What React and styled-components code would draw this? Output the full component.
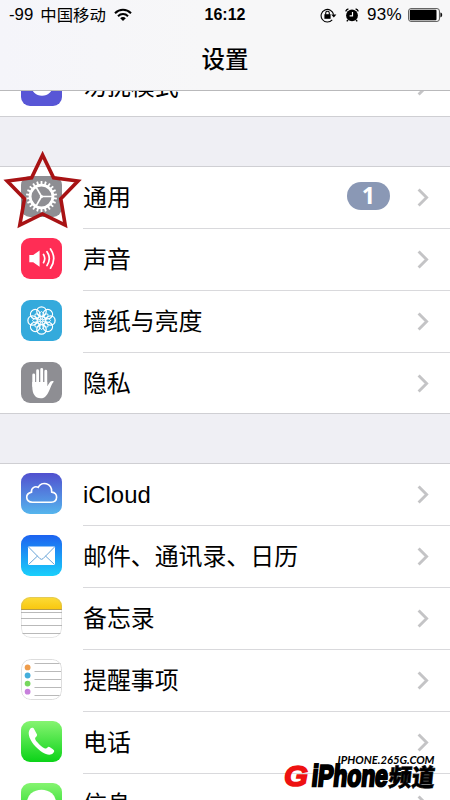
import React from 'react'
import styled, { createGlobalStyle } from 'styled-components'

const GlobalStyle = createGlobalStyle`
  * {
    box-sizing: border-box;
  }
  body {
    margin: 0;
    background: #efeff4;
    color: #000;
    font-family: 'Liberation Sans', 'Noto Sans CJK SC', sans-serif;
  }
`

const WifiIcon = () => (
  <svg width="18" height="14" viewBox="0 0 18 14" fill="none" stroke="#000" strokeWidth="2">
    <path d="M1 5.2C5.6 .6 12.4 .6 17 5.2" />
    <path d="M4 8.2C6.8 5.4 11.2 5.4 14 8.2" />
    <path d="M9 13L6.2 10.2C7.8 8.7 10.2 8.7 11.8 10.2Z" fill="#000" stroke="none" />
  </svg>
)

const LockIcon = () => (
  <svg width="17" height="15" viewBox="0 0 17 15" fill="none" stroke="#000">
    <path d="M12.2 11.8A6.3 6.3 0 1 1 13.6 6.6" strokeWidth="1.1" />
    <path d="M11.2 6.4H16.4L13.8 9.4Z" fill="#000" stroke="none" />
    <rect x="4.4" y="6.2" width="6.2" height="4.6" fill="#000" stroke="none" />
    <path d="M5.7 6.8V5.1a1.8 1.8 0 0 1 3.6 0V6.8" strokeWidth="1.1" />
  </svg>
)

const AlarmIcon = () => (
  <svg width="14" height="14" viewBox="0 0 14 14" fill="none" stroke="#000">
    <circle cx="7" cy="7.4" r="5.9" fill="#000" stroke="none" />
    <path d="M.7 3.4A4 4 0 0 1 3.4 .8M13.3 3.4A4 4 0 0 0 10.6 .8" strokeWidth="1.4" />
    <path d="M3 11.8L1.8 13.4M11 11.8L12.2 13.4" strokeWidth="1.4" />
    <path d="M7.5 4V7.9H4.6" stroke="#fff" strokeWidth="1.2" />
  </svg>
)

const BatteryIcon = () => (
  <svg width="35" height="14" viewBox="0 0 35 14">
    <rect x=".6" y=".6" width="30.8" height="12.8" rx="2.4" fill="#fff" stroke="#555" strokeWidth="1" />
    <rect x="1.8" y="1.8" width="26.7" height="10.4" rx="1" fill="#000" />
    <path d="M32.4 4.6C34.8 5 34.8 9 32.4 9.4Z" fill="#111" />
  </svg>
)

const MoonIcon = () => (
  <svg width="41" height="41" viewBox="0 0 41 41">
    <circle cx="21" cy="19.6" r="11.2" fill="#fff" />
  </svg>
)

const spokes = [0, 120, 240]
const teeth = Array.from({ length: 22 }, (_, i) => (i * 360) / 22)

const GearIcon = () => (
  <svg width="41" height="41" viewBox="0 0 41 41" fill="none" stroke="#fff">
    <circle cx="20.5" cy="20.5" r="11.4" strokeWidth="2.8" />
    {teeth.map((a) => (
      <path key={a} d="M20.5 8.9V5" strokeWidth="1.8" transform={`rotate(${a} 20.5 20.5)`} />
    ))}
    {spokes.map((a) => (
      <path key={a} d="M20.5 20.5H31" strokeWidth="1.7" transform={`rotate(${a} 20.5 20.5)`} />
    ))}
    <circle cx="20.5" cy="20.5" r="1.6" fill="#fff" stroke="none" />
  </svg>
)

const SoundIcon = () => (
  <svg width="41" height="41" viewBox="0 0 41 41" fill="none" stroke="#fff" strokeLinecap="round">
    <path d="M8.3 17H12.2L18.6 12.4V28.8L12.2 24.2H8.3Z" fill="#fff" stroke="none" />
    <path d="M22.5 16.5Q25 20.5 22.5 24.7" strokeWidth="1.7" />
    <path d="M26 13.7Q30.6 20.5 26 27.5" strokeWidth="1.7" />
    <path d="M29.5 11Q36 20.5 29.5 30.2" strokeWidth="1.7" />
  </svg>
)

const petals = [0, 45, 90, 135, 180, 225, 270, 315]

const FlowerIcon = () => (
  <svg width="41" height="41" viewBox="0 0 41 41" fill="none" stroke="#fff" strokeWidth="1.3">
    {petals.map((a) => (
      <g key={a} transform={`rotate(${a} 20.5 20.5)`}>
        <circle cx="20.5" cy="11.6" r="4.7" />
        <path d="M20.5 19.5C17 16.5 17 14 20.5 11.5C24 14 24 16.5 20.5 19.5Z" strokeWidth=".9" />
      </g>
    ))}
  </svg>
)

const HandIcon = () => (
  <svg width="41" height="41" viewBox="0 0 41 41" fill="none" stroke="#fff" strokeLinecap="round">
    <path d="M12.7 13V24M16.6 8.7V22M20.7 7.3V22M24.8 9.2V23" strokeWidth="2.8" />
    <path
      d="M11.3 20H26.2V24.2L29.2 19.8C30.4 18.6 32.8 18.8 32.8 19.8C31.2 21 30.2 24.2 28.7 27.4C26.6 32.5 24.3 36.3 19.7 36.3C14 36.3 11.3 31.4 11.3 25Z"
      fill="#fff"
      stroke="none"
    />
  </svg>
)

const CloudIcon = () => (
  <svg width="41" height="41" viewBox="0 0 41 41" fill="none" stroke="#fff" strokeWidth="1.6">
    <path d="M11.4 29.3H30.2C37.3 28.9 37.3 19.6 30.7 19.1C31.1 10 20.4 7.5 17.2 14.4C13.8 12.7 10 15.2 10.5 19.1C3.8 20.8 4.2 28.7 11.4 29.3Z" />
  </svg>
)

const MailIcon = () => (
  <svg width="41" height="41" viewBox="0 0 41 41" fill="none" stroke="#6aa5d8" strokeWidth="1">
    <rect x="7" y="11.5" width="27" height="18.5" rx=".8" fill="#fff" stroke="none" />
    <path d="M7.5 12L19 23.7Q20.5 25 22 23.7L33.5 12M7.5 29.5L16.5 21M33.5 29.5L24.5 21" />
  </svg>
)

const NotesIcon = () => (
  <svg width="41" height="41" viewBox="0 0 41 41">
    <defs>
      <linearGradient id="notes" x1="0" y1="0" x2="0" y2="1">
        <stop offset="0" stopColor="#fcdb38" />
        <stop offset="1" stopColor="#f8c70e" />
      </linearGradient>
    </defs>
    <rect width="41" height="12.5" fill="url(#notes)" />
    <path d="M0 12.5H41" stroke="#b59a48" />
    <path d="M0 15.5H41M0 21.5H41M0 28.5H41M0 36.5H41" stroke="#b9b9b9" />
    <rect x=".5" y=".5" width="40" height="40" rx="9" fill="none" stroke="#aaa" strokeOpacity=".3" />
  </svg>
)

const RemindersIcon = () => (
  <svg width="41" height="41" viewBox="0 0 41 41">
    <path d="M13.5 4.5H41M13.5 12.5H41M13.5 20.5H41M13.5 28.5H41M13.5 36.5H41" stroke="#b9b9b9" />
    {['#ee9c4b', '#43aedb', '#78d75e', '#c780dc'].map((color, i) => (
      <circle key={color} cx="6.6" cy={8.4 + i * 8.1} r="2.9" fill={color} />
    ))}
    <rect x=".5" y=".5" width="40" height="40" rx="9" fill="none" stroke="#ddd" />
  </svg>
)

const PhoneIcon = () => (
  <svg width="41" height="41" viewBox="0 0 41 41">
    <path
      d="M9.2 7.8C10.5 6.4 12.5 6.6 13.2 8.2L15.9 13.2C16.4 14.4 15.6 15.3 14.4 16.4C13.5 17.6 14.6 19.2 16.4 21.3C18.6 23.8 21.4 26.6 24 27.4C25.3 27.9 26 26.3 27.2 25.9C28.2 25.6 31.5 28 32.7 29C34 30.3 32.5 32.3 30.4 33.3C26 35 19.2 30.4 14.5 25.5C9.6 20.3 5.3 12.6 9.2 7.8Z"
      fill="#fff"
    />
  </svg>
)

const BubbleIcon = () => (
  <svg width="41" height="41" viewBox="0 0 41 41">
    <ellipse cx="20.5" cy="19" rx="14.5" ry="12.2" fill="#fff" />
    <path d="M10 27Q10 32 7.5 33.5Q12 33.5 16 29Z" fill="#fff" />
  </svg>
)

const ArrowIcon = () => (
  <svg width="12" height="19" viewBox="0 0 12 19" fill="none" stroke="#c4c4c6" strokeWidth="2.9">
    <path d="M1.6 1.5L9.6 9.5L1.6 17.5" />
  </svg>
)

const StarMark = () => (
  <svg width="86" height="80" viewBox="0 0 86 80" fill="none" stroke="#a81214" strokeWidth="3.6">
    <path d="M42.6 5L53.6 27.8L78 31L60.8 48.8L65.2 75L42.5 64L19.8 75L24.5 48.8L7.2 31L31.6 27.8Z" />
  </svg>
)

const general = [
  { label: '通用', bg: '#8e8e93', icon: <GearIcon />, badge: '1', star: true },
  { label: '声音', bg: '#ff2d55', icon: <SoundIcon /> },
  { label: '墙纸与亮度', bg: '#34aadc', icon: <FlowerIcon /> },
  { label: '隐私', bg: '#8e8e93', icon: <HandIcon /> },
]

const accounts = [
  { label: 'iCloud', bg: 'linear-gradient(#5150cf, #55b5ed)', icon: <CloudIcon /> },
  { label: '邮件、通讯录、日历', bg: 'linear-gradient(#1d62f0, #1ad0fb)', icon: <MailIcon /> },
  { label: '备忘录', bg: '#fff', icon: <NotesIcon /> },
  { label: '提醒事项', bg: '#fff', icon: <RemindersIcon /> },
  { label: '电话', bg: 'linear-gradient(#86f471, #0bd318)', icon: <PhoneIcon /> },
  { label: '信息', bg: 'linear-gradient(#86f471, #0bd318)', icon: <BubbleIcon /> },
]

const SettingRow = ({ label, bg, icon, badge, star }) => (
  <Row>
    <IconBox $bg={bg}>{icon}</IconBox>
    {star && (
      <Star>
        <StarMark />
      </Star>
    )}
    <RowBody>
      <Label>{label}</Label>
      {badge && <Badge>{badge}</Badge>}
      <ArrowIcon />
    </RowBody>
  </Row>
)

const App = () => {
  return (
    <>
      <GlobalStyle />
      <Screen>
        <Header>
          <StatusBar>
            <StatusLeft>
              <span>-99</span>
              <Carrier>中国移动</Carrier>
              <WifiIcon />
            </StatusLeft>
            <Time>16:12</Time>
            <StatusRight>
              <LockIcon />
              <AlarmIcon />
              <Percent>93%</Percent>
              <BatteryIcon />
            </StatusRight>
          </StatusBar>
          <Title>设置</Title>
        </Header>
        <Clipped>
          <SettingRow label="勿扰模式" bg="#5856d6" icon={<MoonIcon />} />
        </Clipped>
        <Group>
          {general.map((item) => (
            <SettingRow key={item.label} {...item} />
          ))}
        </Group>
        <Group>
          {accounts.map((item) => (
            <SettingRow key={item.label} {...item} />
          ))}
        </Group>
        <Watermark>
          <svg width="156" height="40" viewBox="0 0 156 40">
            <g fontFamily="'Liberation Sans', 'Noto Sans CJK SC', sans-serif" fontWeight="bold">
              <text x="53.5" y="12.5" fontSize="11.5" fontStyle="italic" fontFamily="Lato, sans-serif" textLength="97" lengthAdjust="spacingAndGlyphs">IPHONE.265G.COM</text>
              <text x="0" y="35" fontSize="30" fontStyle="italic" fill="#ee1111" stroke="#ee1111" strokeWidth="1.6" textLength="24" lengthAdjust="spacingAndGlyphs">G</text>
              <text transform="translate(27 35) skewX(-6)" fontSize="30" stroke="#000" strokeWidth="2.4" textLength="76" lengthAdjust="spacingAndGlyphs">iPhone</text>
              <text transform="translate(104 35) skewX(-6)" fontSize="24" fontWeight="900" stroke="#000" strokeWidth=".6" textLength="46" lengthAdjust="spacingAndGlyphs">频道</text>
            </g>
          </svg>
        </Watermark>
      </Screen>
    </>
  )
}

export default App

const Screen = styled.div`
  position: relative;
  width: 450px;
  height: 800px;
  overflow: hidden;
  background: #efeff4;
`
const Header = styled.div`
  height: 91px;
  background: linear-gradient(90deg, #f5f5fa, #f7f7f8 45%);
  border-bottom: 1px solid #b9b9bb;
`
const StatusBar = styled.div`
  display: grid;
  grid-template-columns: 1fr auto 1fr;
  align-items: center;
  height: 30px;
  padding: 0 7px 0 9px;
  font-size: 16px;
`
const StatusLeft = styled.div`
  display: flex;
  align-items: center;
  font-size: 16.8px;
`
const Carrier = styled.span`
  margin: 0 8px 0 7px;
  font-size: 16.4px;
  line-height: 20px;
`
const Time = styled.div`
  font-size: 16px;
  font-weight: bold;
  margin-right: 2px;
`
const StatusRight = styled.div`
  display: flex;
  align-items: center;
  justify-content: flex-end;
  gap: 8px;
`
const Percent = styled.span`
  font-size: 17px;
  letter-spacing: 0.3px;
  margin-right: -2px;
`
const Title = styled.div`
  height: 60px;
  line-height: 60px;
  text-align: center;
  font-size: 23.5px;
  font-weight: 500;
`
const RowBody = styled.div`
  flex: 1;
  display: flex;
  align-items: center;
  height: 62px;
  padding-right: 21px;
  border-top: 1px solid #d9d9dc;
`
const Row = styled.div`
  position: relative;
  flex: none;
  display: flex;
  height: 62px;
  padding-left: 21px;
`
const Clipped = styled.div`
  display: flex;
  flex-direction: column;
  justify-content: flex-end;
  height: 26px;
  overflow: hidden;
  background: #fff;
  border-bottom: 1px solid #cfcfd3;
  ${Row} {
    height: 61px;
  }
`
const Group = styled.div`
  margin-top: 49px;
  background: #fff;
  border-bottom: 1px solid #cfcfd3;
  ${Row}:first-child {
    border-top: 1px solid #cfcfd3;
  }
  ${Row}:first-child ${RowBody} {
    height: 61px;
    border-top: none;
  }
  ${Row}:last-child {
    height: 61px;
  }
  ${Row}:first-child > :first-child {
    margin-top: 9px;
  }
`
const IconBox = styled.div`
  flex: none;
  width: 41px;
  height: 41px;
  margin: 10px 21px 0 0;
  border-radius: 9px;
  overflow: hidden;
  background: ${(p) => p.$bg};
  svg {
    display: block;
  }
`
const Label = styled.div`
  flex: 1;
  font-size: 23.9px;
  line-height: 36px;
`
const Badge = styled.div`
  width: 43px;
  height: 28px;
  margin: -4px 27px 0 0;
  border-radius: 14px;
  background: #8a98b5;
  color: #fff;
  font-family: 'Noto Sans', sans-serif;
  font-size: 23.5px;
  font-weight: bold;
  line-height: 27px;
  text-align: center;
`
const Star = styled.div`
  position: absolute;
  left: 0;
  top: -17px;
  z-index: 1;
`
const Watermark = styled.div`
  position: absolute;
  left: 284px;
  top: 751px;
  z-index: 2;
`
